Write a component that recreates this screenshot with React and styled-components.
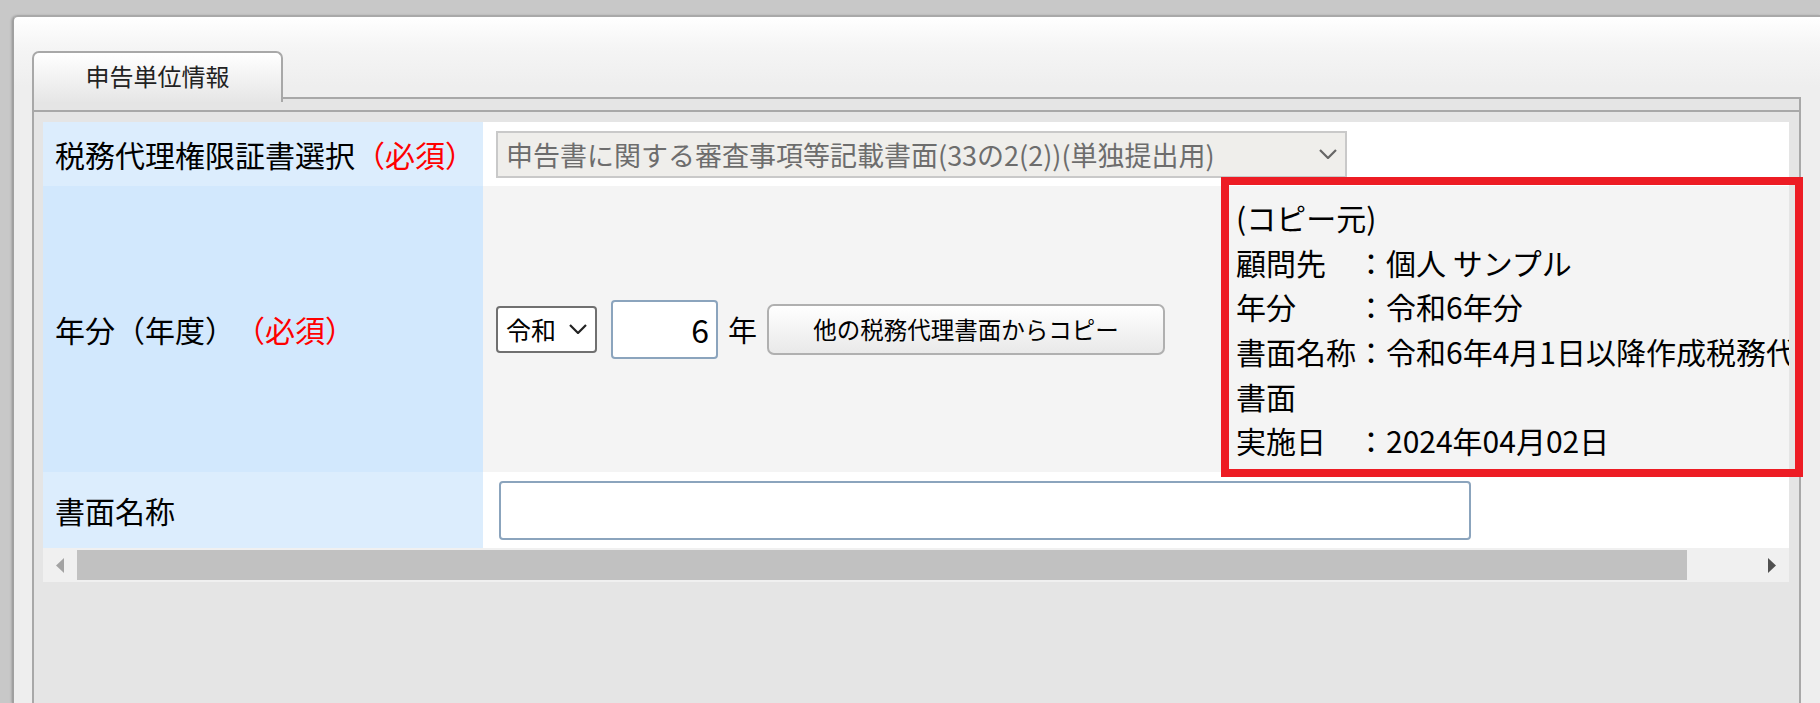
import React from 'react';
import styled, { createGlobalStyle } from 'styled-components';

const GlobalStyle = createGlobalStyle`
  html, body {
    margin: 0;
    padding: 0;
    background: #c8c8c8;
  }
  body {
    font-family: "Noto Sans CJK JP", "Noto Sans", sans-serif;
    color: #000;
  }
  * { box-sizing: border-box; }
`;

const Page = styled.div`
  position: relative;
  height: 703px;
  padding: 15px 0 0 12px;
  overflow: hidden;
`;

const Window = styled.div`
  height: 100%;
  border-top: 2px solid #a9a9a9;
  border-left: 2px solid #a0a0a0;
  border-top-left-radius: 6px;
  box-shadow: -1px 0 2px rgba(0, 0, 0, 0.15);
  background: linear-gradient(#ffffff 0, #f5f5f5 30px, #eeeeee 70px, #eeeeee 100%);
  padding: 34px 19px 0 18px;
  display: flex;
  flex-direction: column;
`;

const TabStrip = styled.div`
  display: flex;
  align-items: flex-end;
  height: 48px;
`;

const Tab = styled.div`
  position: relative;
  z-index: 1;
  width: 251px;
  height: 51px;
  margin-bottom: -3px;
  border: 2px solid #a8a8a8;
  border-bottom: none;
  border-radius: 7px 7px 0 0;
  background: linear-gradient(#ffffff, #e6e6e6);
  display: flex;
  align-items: center;
  justify-content: center;
  padding-bottom: 4px;
  font-size: 24px;
  color: #222;
`;

const StripLine = styled.div`
  flex: 1;
  border-bottom: 2px solid #a8a8a8;
`;

const TabPanel = styled.div`
  flex: 1;
  border-left: 2px solid #a8a8a8;
  border-right: 2px solid #a8a8a8;
  background: #e5e5e5;
  padding-top: 11px;
  display: flex;
  flex-direction: column;
`;

const ContentArea = styled.div`
  flex: 1;
  border-top: 2px solid #a8a8a8;
  padding: 10px 10px 0 9px;
`;

const ScrollArea = styled.div`
  overflow: hidden;
  background: #fff;
`;

const FormTable = styled.div`
  width: 1900px;
  display: flex;
  flex-direction: column;
`;

const Row = styled.div`
  display: flex;
  min-height: ${p => p.$h}px;
`;

const LabelCell = styled.div`
  flex: none;
  width: 440px;
  padding-left: 12px;
  display: flex;
  align-items: center;
  background: ${p => p.$bg};
  font-size: 30px;
  white-space: nowrap;
`;

const Required = styled.span`
  color: #ff0000;
`;

const ValueCell = styled.div`
  flex: 1;
  display: flex;
  align-items: center;
  padding: 0 13px;
  background: ${p => p.$bg};
`;

const SelectBox = styled.div`
  display: flex;
  align-items: center;
  justify-content: space-between;
  width: ${p => p.$w}px;
  height: 47px;
  padding: 0 8px 0 8px;
  border: 2px solid ${p => (p.$disabled ? '#c9c9c9' : '#707070')};
  border-radius: ${p => (p.$disabled ? '0' : '4px')};
  background: ${p => (p.$disabled ? '#efeeeb' : '#fff')};
  color: ${p => (p.$disabled ? '#6d6d6d' : '#000')};
  font-size: ${p => (p.$disabled ? 27 : 25)}px;
  white-space: nowrap;
`;

const Chevron = ({ color }) => (
  <svg width="18" height="10" viewBox="0 0 18 10">
    <polyline points="1,1 9,9 17,1" fill="none" stroke={color} strokeWidth="2.2" />
  </svg>
);

const TextInput = styled.input`
  width: ${p => p.$w}px;
  height: 59px;
  margin-left: ${p => p.$ml}px;
  padding: 0 7px;
  border: 2px solid #8ba4bd;
  border-radius: 4px;
  background: #fff;
  font-family: inherit;
  font-size: 32px;
  text-align: ${p => p.$align || 'left'};
  outline: none;
`;

const Unit = styled.span`
  margin-left: 10px;
  font-size: 29px;
`;

const CopyButton = styled.button`
  width: 398px;
  height: 51px;
  margin-left: 10px;
  border: 2px solid #b0b0b0;
  border-radius: 7px;
  background: linear-gradient(#ffffff, #e9e9e9);
  font-family: inherit;
  font-size: 23.5px;
  color: #000;
  padding: 0;
`;

const InfoBlock = styled.div`
  flex: none;
  width: 606px;
  margin-left: 71px;
  font-size: 30px;
  line-height: 44.67px;
  white-space: pre-wrap;
`;

const ScrollBar = styled.div`
  display: flex;
  height: 34px;
  background: #f0f0f0;
  padding: 2px 0;
`;

const ArrowButton = styled.div`
  width: 34px;
  display: flex;
  align-items: center;
  justify-content: center;
`;

const Thumb = styled.div`
  width: 1610px;
  background: #c1c1c1;
`;

const Track = styled.div`
  flex: 1;
`;

const Highlight = styled.div`
  position: absolute;
  left: 1221px;
  top: 177px;
  width: 582px;
  height: 300px;
  border: 8px solid #ed1c24;
  pointer-events: none;
`;

const copySource = [
  '(コピー元)',
  '顧問先　：個人 サンプル',
  '年分　　：令和6年分',
  '書面名称：令和6年4月1日以降作成税務代理書面',
  '実施日　：2024年04月02日',
];

export default function App() {
  return (
    <>
      <GlobalStyle />
      <Page>
        <Window>
          <TabStrip>
            <Tab>申告単位情報</Tab>
            <StripLine />
          </TabStrip>
          <TabPanel>
            <ContentArea>
              <ScrollArea>
                <FormTable>
                  <Row $h={64}>
                    <LabelCell $bg="#dcedfd">
                      税務代理権限証書選択<Required>（必須）</Required>
                    </LabelCell>
                    <ValueCell $bg="#ffffff">
                      <SelectBox $w={851} $disabled>
                        <span>申告書に関する審査事項等記載書面(33の2(2))(単独提出用)</span>
                        <Chevron color="#666" />
                      </SelectBox>
                    </ValueCell>
                  </Row>
                  <Row $h={286}>
                    <LabelCell $bg="#d2e8fd">
                      年分（年度）<Required>（必須）</Required>
                    </LabelCell>
                    <ValueCell $bg="#f4f4f4">
                      <SelectBox $w={101}>
                        <span>令和</span>
                        <Chevron color="#222" />
                      </SelectBox>
                      <TextInput $w={107} $ml={14} $align="right" defaultValue="6" />
                      <Unit>年</Unit>
                      <CopyButton>他の税務代理書面からコピー</CopyButton>
                      <InfoBlock>{copySource.join('\n')}</InfoBlock>
                    </ValueCell>
                  </Row>
                  <Row $h={76}>
                    <LabelCell $bg="#dcedfd">書面名称</LabelCell>
                    <ValueCell $bg="#ffffff">
                      <TextInput $w={972} $ml={3} defaultValue="" />
                    </ValueCell>
                  </Row>
                </FormTable>
              </ScrollArea>
              <ScrollBar>
                <ArrowButton>
                  <svg width="8" height="15" viewBox="0 0 8 15">
                    <polygon points="8,0 0,7.5 8,15" fill="#a3a3a3" />
                  </svg>
                </ArrowButton>
                <Thumb />
                <Track />
                <ArrowButton>
                  <svg width="8" height="15" viewBox="0 0 8 15">
                    <polygon points="0,0 8,7.5 0,15" fill="#505050" />
                  </svg>
                </ArrowButton>
              </ScrollBar>
            </ContentArea>
          </TabPanel>
        </Window>
        <Highlight />
      </Page>
    </>
  );
}
